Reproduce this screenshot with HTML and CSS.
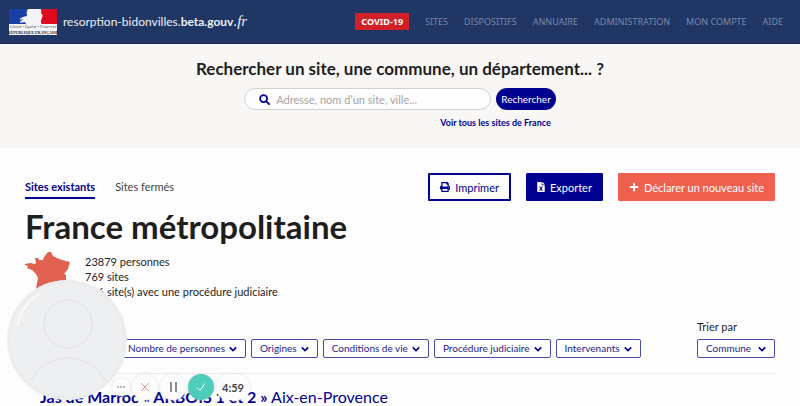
FILE: index.html
```html
<!DOCTYPE html>
<html lang="fr">
<head>
<meta charset="utf-8">
<meta name="viewport" content="width=device-width, initial-scale=1">
<title>Résorption-bidonvilles</title>
<link rel="stylesheet" href="styles.css">
</head>
<body>
<header class="topbar">
  <a class="brand" href="#">
    <svg class="brand-logo" viewBox="0 0 48 26" aria-hidden="true">
      <rect width="48" height="26" fill="#f4f4f6"/>
      <rect width="20" height="15" fill="#1a3fa6"/>
      <rect x="32" width="16" height="15" fill="#dc0a1c"/>
      <path d="M19 0C17 3 18 5 18 7l-4 1-3 3 4-1-4 4 5-1 1 2h16c-1-1-3-2-3-3l2-1 1-2v-1l1-1-2-3c1-2 0-3-1-4z" fill="#f4f4f6"/>
      <path d="M11 10l5-2M11 13l5-3" stroke="#f4f4f6" stroke-width="1"/>
      <text class="logo-motto" x="24" y="19" text-anchor="middle">Liberté • Égalité • Fraternité</text>
      <text class="logo-state" x="24" y="25" text-anchor="middle">République Française</text>
    </svg>
    <span class="brand-name">resorption-bidonvilles.<b>beta.gouv</b><i>.fr</i></span>
  </a>
  <nav class="nav">
    <a class="nav-alert" href="#">COVID-19</a>
    <a href="#">SITES</a>
    <a href="#">DISPOSITIFS</a>
    <a href="#">ANNUAIRE</a>
    <a href="#">ADMINISTRATION</a>
    <a href="#">MON COMPTE</a>
    <a href="#">AIDE</a>
  </nav>
</header>

<section class="search">
  <h2 class="search-title"><label for="q">Rechercher un site, une commune, un département... ?</label></h2>
  <form class="search-form">
    <div class="search-row">
      <div class="search-box">
        <svg class="icon-search" viewBox="0 0 12 12" aria-hidden="true"><circle cx="5" cy="5" r="3.8"/><path d="M8 8l3 3"/></svg>
        <input id="q" type="text" placeholder="Adresse, nom d’un site, ville...">
      </div>
      <button class="search-submit" type="button">Rechercher</button>
    </div>
    <a class="search-all" href="#">Voir tous les sites de France</a>
  </form>
</section>

<main class="content">
  <div class="toolbar">
    <nav class="tabs">
      <a class="tab tab-active" href="#">Sites existants</a>
      <a class="tab" href="#">Sites fermés</a>
    </nav>
    <div class="actions">
      <button class="btn btn-outline" type="button">
        <svg class="icon" viewBox="0 0 512 512" aria-hidden="true"><path d="M448 192V77c0-8-3-17-9-23L394 9c-6-6-14-9-23-9H96C78 0 64 14 64 32v160c-35 0-64 29-64 64v112c0 9 7 16 16 16h48v96c0 18 14 32 32 32h320c18 0 32-14 32-32v-96h48c9 0 16-7 16-16V256c0-35-29-64-64-64zm-64 256H128v-96h256v96zm0-224H128V64h192v48c0 9 7 16 16 16h48v96zm48 72c-13 0-24-11-24-24s11-24 24-24 24 11 24 24-11 24-24 24z"/></svg>
        Imprimer
      </button>
      <button class="btn btn-primary" type="button">
        <svg class="icon icon-file" viewBox="0 0 384 512" aria-hidden="true"><path d="M224 136V0H24C11 0 0 11 0 24v464c0 13 11 24 24 24h336c13 0 24-11 24-24V160H248c-13 0-24-11-24-24zm60 107l-60 93 60 93c5 8 0 19-10 19h-35c-4 0-8-2-10-6-37-68-26-48-37-73-9 20-5 14-37 73-2 4-6 6-10 6h-35c-10 0-16-11-10-19l60-93-60-93c-6-8 0-19 10-19h35c4 0 8 2 10 6 26 49 20 35 37 73 17-38 10-24 37-73 2-4 6-6 10-6h35c10 0 15 11 10 19zM384 122v6H256V0h6c6 0 13 3 17 7l98 98c4 4 7 11 7 17z"/></svg>
        Exporter
      </button>
      <button class="btn btn-accent" type="button">
        <svg class="icon" viewBox="0 0 448 512" aria-hidden="true"><path d="M416 208H272V64c0-18-14-32-32-32h-32c-18 0-32 14-32 32v144H32c-18 0-32 14-32 32v32c0 18 14 32 32 32h144v144c0 18 14 32 32 32h32c18 0 32-14 32-32V304h144c18 0 32-14 32-32v-32c0-18-14-32-32-32z"/></svg>
        Déclarer un nouveau site
      </button>
    </div>
  </div>

  <h1 class="title">France métropolitaine</h1>

  <div class="summary">
    <svg class="map" viewBox="0 0 46 46" aria-hidden="true"><path d="M0 13l5-1 5 1 1-1-1-5h3l1 2 4 0 1-3 4-5 3 0 2 4 4 2 5 2 8 2-2 7-4 5 2 1v7l2 3-5 5-6-1-4 2v3l-6-1-11-4 1-6 1-5-2-4-4-4-5-2 1-2-3-1z"/></svg>
    <ul class="stats">
      <li>23879 personnes</li>
      <li>769 sites</li>
      <li>316 site(s) avec une procédure judiciaire</li>
    </ul>
  </div>

  <div class="filterbar">
    <div class="filters">
      <button class="filter" type="button">Nombre de personnes <svg class="chevron" viewBox="0 0 10 6" aria-hidden="true"><path d="M1 1l4 4 4-4"/></svg></button>
      <button class="filter" type="button">Origines <svg class="chevron" viewBox="0 0 10 6" aria-hidden="true"><path d="M1 1l4 4 4-4"/></svg></button>
      <button class="filter" type="button">Conditions de vie <svg class="chevron" viewBox="0 0 10 6" aria-hidden="true"><path d="M1 1l4 4 4-4"/></svg></button>
      <button class="filter" type="button">Procédure judiciaire <svg class="chevron" viewBox="0 0 10 6" aria-hidden="true"><path d="M1 1l4 4 4-4"/></svg></button>
      <button class="filter" type="button">Intervenants <svg class="chevron" viewBox="0 0 10 6" aria-hidden="true"><path d="M1 1l4 4 4-4"/></svg></button>
    </div>
    <div class="sort">
      <label for="sort">Trier par</label>
      <div class="sort-box">
        <select id="sort"><option>Commune</option></select>
        <svg class="chevron" viewBox="0 0 10 6" aria-hidden="true"><path d="M1 1l4 4 4-4"/></svg>
      </div>
    </div>
  </div>

  <article class="site">
    <h2 class="site-name"><b>Jas de Marroc « ARBOIS 1 et 2 »</b> Aix-en-Provence</h2>
  </article>
</main>

<aside class="recorder">
  <svg class="avatar" viewBox="0 0 120 120" aria-hidden="true">
    <circle cx="60" cy="60" r="60" fill="#eeeff1"/>
    <circle cx="60" cy="60" r="58" fill="none" stroke="#ebecee" stroke-width="3"/>
    <path d="M10 46C14 30 22 20 32 14" fill="none" stroke="#fafafa" stroke-width="2"/>
    <circle cx="61" cy="44" r="24" fill="#edeef0" stroke="#e6e7e9" stroke-width="2"/>
    <path d="M24 100c8-14 22-22 37-22s29 8 37 22" fill="none" stroke="#e6e7e9" stroke-width="2"/>
  </svg>
  <div class="controls">
    <button class="ctl ctl-small" type="button" aria-label="Options"><svg viewBox="0 0 10 10"><path class="dots" d="M1 5h2M4 5h2M7 5h2"/></svg></button>
    <button class="ctl" type="button" aria-label="Annuler"><svg viewBox="0 0 10 10"><path class="cross" d="M1 1l8 8M9 1l-8 8"/></svg></button>
    <button class="ctl" type="button" aria-label="Pause"><svg viewBox="0 0 10 10"><path class="bars" d="M3 0v10M8 0v10"/></svg></button>
    <button class="ctl ctl-done" type="button" aria-label="Terminer"><svg viewBox="0 0 10 10"><path class="check" d="M1 5.500l3 3 5-7"/></svg></button>
    <span class="ctl ctl-time">4:59</span>
  </div>
</aside>
</body>
</html>
```
FILE: styles.css
```css
* { box-sizing: border-box; }

body {
  margin: 0;
  height: 100vh;
  overflow: hidden;
  position: relative;
  background: #fefdfd;
  color: #1e1e1e;
  font-family: Lato, "Liberation Sans", sans-serif;
  font-size: 11px;
  line-height: 15px;
}

a { color: inherit; text-decoration: none; }
button, input, select { font: inherit; color: inherit; margin: 0; }
button { cursor: pointer; }
h1, h2, ul { margin: 0; padding: 0; }

.topbar {
  display: flex;
  align-items: center;
  justify-content: space-between;
  height: 44px;
  padding: 0 17px 0 9px;
  background: #203664;
  border-bottom: 1px solid #16284f;
}
.brand { display: flex; align-items: center; gap: 6px; color: #eef1f7; }
.brand-logo { width: 48px; height: 26px; }
.logo-motto { font: italic 4px "Liberation Serif", serif; fill: #555; }
.logo-state { font: bold 4px "Liberation Serif", serif; fill: #222; text-transform: uppercase; }
.brand-name { font-size: 12px; }
.brand-name i { font-family: "Liberation Serif", serif; font-size: 15px; }

.nav {
  display: flex;
  align-items: center;
  gap: 16px;
  color: #7888ab;
  font-family: "Noto Sans", sans-serif;
  font-size: 9px;
}
.nav-alert { padding: 1px 6px; background: #d0202a; color: #fff; font-weight: 700; }

.search {
  display: flex;
  flex-direction: column;
  align-items: center;
  padding: 14px 0 18px;
  background: #f8f7f6;
}
.search-title { font-size: 17px; line-height: 22px; margin-bottom: 8px; }
.search-form { display: flex; flex-direction: column; align-items: flex-end; }
.search-row { display: flex; gap: 5px; }
.search-box {
  display: flex;
  align-items: center;
  gap: 6px;
  width: 247px;
  height: 22px;
  padding: 0 14px;
  border: 1px solid #d2d2d2;
  border-radius: 11px;
  background: #fdfdfd;
}
.icon-search { width: 11px; height: 11px; fill: none; stroke: #000091; stroke-width: 2; stroke-linecap: round; }
.search-box input { flex: 1; min-width: 0; padding: 0; border: 0; outline: 0; background: none; }
.search-box input::placeholder { color: #a5a5a5; opacity: 1; }
.search-submit {
  height: 22px;
  padding: 0 5px;
  border: 0;
  border-radius: 11px;
  background: #000091;
  color: #fff;
  font-size: 10px;
}
.search-all { margin: 5px 5px 0 0; color: #000091; font-size: 9px; font-weight: 700; }

.content { padding: 25px 25px 0; }
.toolbar { display: flex; justify-content: space-between; align-items: flex-start; }
.tabs { display: flex; gap: 20px; padding-top: 4px; }
.tab { padding: 2px 0 3px; color: #444; }
.tab-active { border-bottom: 2px solid #000091; color: #000091; font-weight: 700; }
.actions { display: flex; gap: 15px; }
.btn {
  display: flex;
  align-items: center;
  gap: 5px;
  height: 28px;
  padding: 0 10px;
  border: 1px solid;
  border-radius: 1px;
}
.icon { width: 10px; height: 10px; fill: currentColor; }
.icon-file { width: 8px; }
.btn-outline { border: 2px solid #000091; background: #fefefe; color: #000091; }
.btn-primary { border-color: #000091; background: #000091; color: #fff; }
.btn-accent { border-color: #f0604f; background: #f0604f; color: #fff; }

.title { margin: 5px 0; font-size: 33px; line-height: 40px; }

.summary { display: flex; gap: 14px; }
.map { width: 46px; height: 46px; fill: #e06150; }
.stats { padding-top: 3px; list-style: none; }

.filterbar { display: flex; justify-content: space-between; align-items: flex-end; margin-top: 20px; }
.filters { display: flex; gap: 5px; padding-left: 94px; }
.filter, .sort select {
  height: 19px;
  padding: 0 8px;
  border: 1px solid #4b4ba8;
  border-radius: 2px;
  background: #fefefe;
  color: #1c1c8f;
  font-size: 10px;
}
.filter { display: flex; align-items: center; gap: 4px; }
.chevron { width: 8px; height: 6px; fill: none; stroke: #000091; stroke-width: 2; }
.sort { display: flex; flex-direction: column; gap: 5px; }
.sort-box { display: grid; align-items: center; }
.sort-box > * { grid-area: 1 / 1; }
.sort-box .chevron { justify-self: end; margin-right: 9px; pointer-events: none; }
.sort select { appearance: none; padding-right: 22px; }

.site { margin-top: 15px; padding: 13px 15px; border-top: 1px solid #ebebf0; }
.site-name { color: #000091; font-size: 16px; line-height: 20px; font-weight: 400; }

.recorder { position: absolute; left: 7px; bottom: 6px; display: flex; align-items: flex-end; }
.avatar { width: 120px; height: 120px; }
.controls { position: absolute; left: 105px; bottom: 0; display: flex; align-items: center; gap: 2px; }
.ctl {
  display: flex;
  align-items: center;
  justify-content: center;
  width: 26px;
  height: 26px;
  padding: 0;
  border: 0;
  border-radius: 13px;
  background: #fcfcfc;
  box-shadow: 0 0 3px #ddd;
}
.ctl svg { width: 10px; height: 10px; fill: none; }
.ctl-small { width: 18px; height: 18px; }
.ctl-done { background: #4fcdbb; }
.ctl-time { width: 34px; color: #444; font-size: 11px; font-weight: 700; }
.dots { stroke: #777; }
.cross { stroke: #e59a9a; }
.bars { stroke: #8c8c8c; stroke-width: 2; }
.check { stroke: #fff; stroke-width: 1; }
```
